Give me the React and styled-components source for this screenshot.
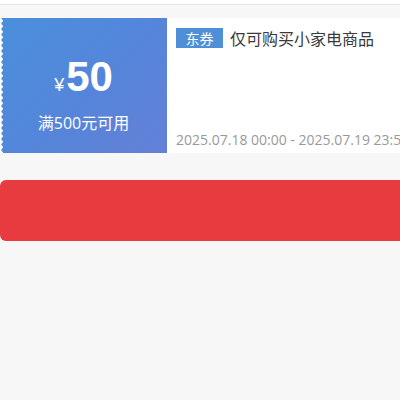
import React from 'react';
import styled, { createGlobalStyle } from 'styled-components';

const GlobalStyle = createGlobalStyle`
  html, body {
    margin: 0;
    padding: 0;
    background: #f7f7f7;
    font-family: "Open Sans", "Noto Sans CJK SC", sans-serif;
    overflow: hidden;
  }
`;

const Page = styled.div`
  width: 560px;
  min-height: 400px;
  background: #f7f7f7;
`;

const TopBar = styled.div`
  height: 4px;
  background: #fff;
  border-bottom: 1px solid #e6e6e6;
`;

const List = styled.div`
  padding-top: 13px;
`;

const Coupon = styled.div`
  display: flex;
  height: 135px;
  background: #fff;
`;

const Amount = styled.div`
  position: relative;
  width: 167px;
  flex-shrink: 0;
  display: flex;
  flex-direction: column;
  align-items: center;
  justify-content: center;
  color: #fff;
  background: linear-gradient(135deg, #4a8fdc 0%, #5585da 55%, #6480d6 100%);

  &::before {
    content: '';
    position: absolute;
    left: -2px;
    top: 0;
    bottom: 0;
    width: 5px;
    background: radial-gradient(circle at 2px 2.75px, #fff 2.5px, transparent 2.9px);
    background-size: 5px 5.5px;
  }
`;

const Price = styled.div`
  display: flex;
  align-items: baseline;
  margin-top: 17px;
`;

const Yen = styled.span`
  font-family: "Liberation Sans", Arial, sans-serif;
  font-size: 18px;
  margin-right: 2px;
`;

const Value = styled.span`
  font-family: "Liberation Sans", Arial, sans-serif;
  font-size: 42px;
  font-weight: bold;
  line-height: 42px;
`;

const Condition = styled.div`
  font-size: 16px;
  line-height: 20px;
  margin-top: 15px;
`;

const Info = styled.div`
  flex: 1;
  display: flex;
  flex-direction: column;
  justify-content: space-between;
  padding: 8px 0 4px 9px;
`;

const TitleRow = styled.div`
  display: flex;
  align-items: center;
  white-space: nowrap;
`;

const Tag = styled.span`
  display: inline-flex;
  align-items: center;
  justify-content: center;
  width: 47px;
  height: 20px;
  background: #4f8fd8;
  color: #fff;
  font-size: 14px;
`;

const Title = styled.span`
  margin-left: 7px;
  font-size: 16px;
  color: #3a3a3a;
`;

const Period = styled.div`
  font-size: 14px;
  color: #999;
  white-space: nowrap;
`;

const UseButton = styled.button`
  display: block;
  width: 540px;
  height: 61px;
  margin-top: 27px;
  border: none;
  border-radius: 6px;
  background: #e83b3f;
`;

export default function App() {
  return (
    <Page>
      <GlobalStyle />
      <TopBar />
      <List>
        <Coupon>
          <Amount>
            <Price>
              <Yen>¥</Yen>
              <Value>50</Value>
            </Price>
            <Condition>满500元可用</Condition>
          </Amount>
          <Info>
            <TitleRow>
              <Tag>东券</Tag>
              <Title>仅可购买小家电商品</Title>
            </TitleRow>
            <Period>2025.07.18 00:00 - 2025.07.19 23:59</Period>
          </Info>
        </Coupon>
        <UseButton />
      </List>
    </Page>
  );
}
